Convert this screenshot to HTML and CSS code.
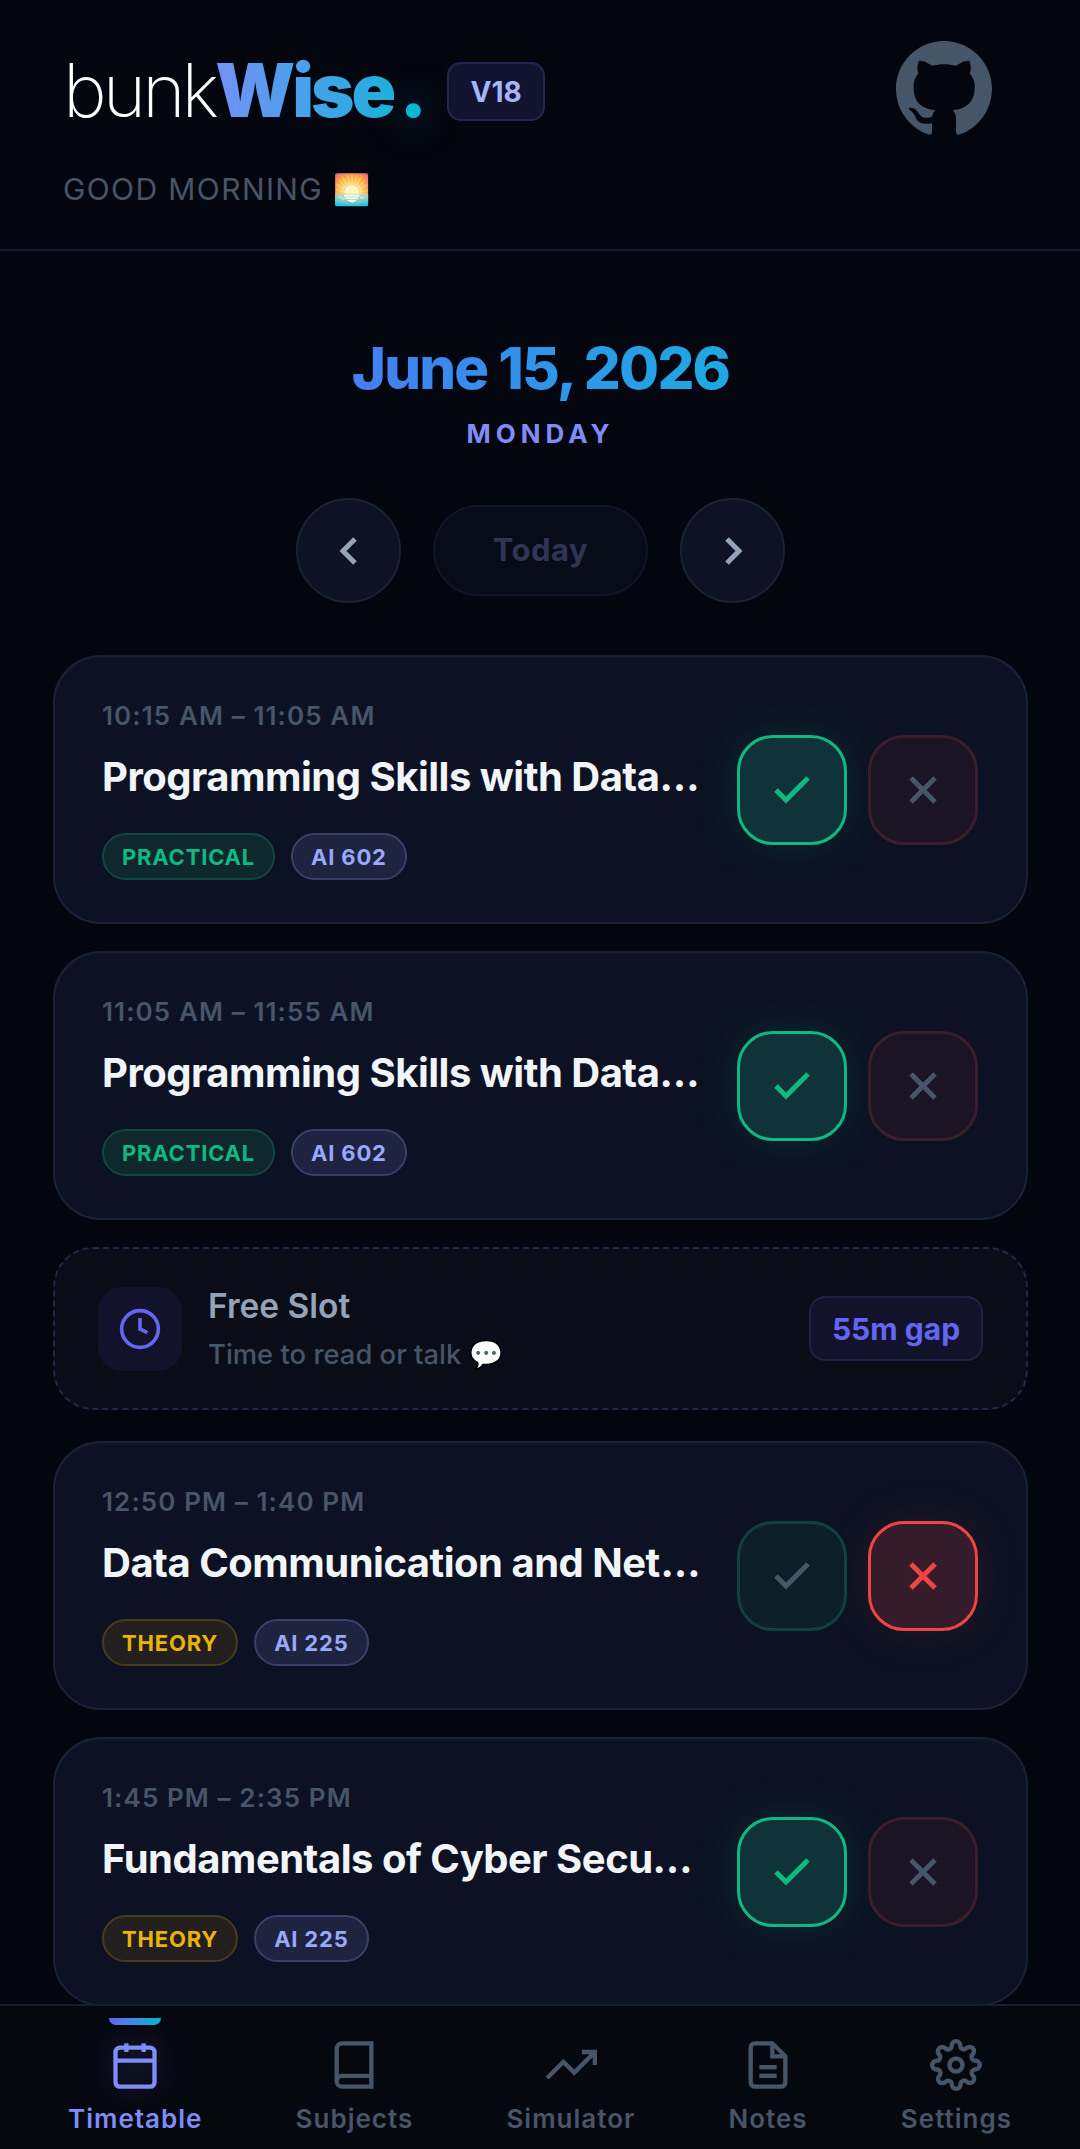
FILE: index.html
```html
<!DOCTYPE html>
<html lang="en">
<head>
  <meta charset="UTF-8" />
  <title>bunkWise</title>
  <link rel="stylesheet" href="styles.css">
</head>
<body>
  <header class="top-bar">
    <div class="top-left">
      <div class="brand-row">
        <div class="logo">bunk<span class="logo-wise">Wise</span><span class="logo-dot">.</span></div>
        <span class="version">V18</span>
      </div>
      <div class="greeting">GOOD MORNING 🌅</div>
    </div>
    <svg class="github" viewBox="0 0 16 16" fill="currentColor"><path d="M8 0C3.58 0 0 3.58 0 8c0 3.54 2.29 6.53 5.47 7.59.4.07.55-.17.55-.38 0-.19-.01-.82-.01-1.49-2.01.37-2.53-.49-2.69-.94-.09-.23-.48-.94-.82-1.13-.28-.15-.68-.52-.01-.53.63-.01 1.08.58 1.23.82.72 1.21 1.87.87 2.33.66.07-.52.28-.87.51-1.07-1.78-.2-3.64-.89-3.64-3.95 0-.87.31-1.59.82-2.15-.08-.2-.36-1.02.08-2.12 0 0 .67-.21 2.2.82.64-.18 1.32-.27 2-.27.68 0 1.36.09 2 .27 1.53-1.04 2.2-.82 2.2-.82.44 1.1.16 1.92.08 2.12.51.56.82 1.27.82 2.15 0 3.07-1.87 3.75-3.65 3.95.29.25.54.73.54 1.48 0 1.07-.01 1.93-.01 2.2 0 .21.15.46.55.38A8.013 8.013 0 0016 8c0-4.42-3.58-8-8-8z"/></svg>
  </header>

  <main class="content">
    <h1 class="date">June 15, 2026</h1>
    <div class="weekday">MONDAY</div>

    <div class="date-nav">
      <button class="circle-btn"><svg viewBox="0 0 24 24" class="chev"><polyline points="15 18 9 12 15 6"/></svg></button>
      <button class="today-btn">Today</button>
      <button class="circle-btn"><svg viewBox="0 0 24 24" class="chev"><polyline points="9 18 15 12 9 6"/></svg></button>
    </div>

    <div class="slots">
      <div class="card">
        <div class="card-info">
          <div class="time">10:15 AM – 11:05 AM</div>
          <div class="title">Programming Skills with Data Science Lab</div>
          <div class="tags"><span class="tag practical">PRACTICAL</span><span class="tag room">AI 602</span></div>
        </div>
        <div class="actions">
          <button class="act yes on"><svg viewBox="0 0 24 24"><polyline points="20 6 9 17 4 12"/></svg></button>
          <button class="act no"><svg viewBox="0 0 24 24"><line x1="18" y1="6" x2="6" y2="18"/><line x1="6" y1="6" x2="18" y2="18"/></svg></button>
        </div>
      </div>

      <div class="card">
        <div class="card-info">
          <div class="time">11:05 AM – 11:55 AM</div>
          <div class="title">Programming Skills with Data Science Lab</div>
          <div class="tags"><span class="tag practical">PRACTICAL</span><span class="tag room">AI 602</span></div>
        </div>
        <div class="actions">
          <button class="act yes on"><svg viewBox="0 0 24 24"><polyline points="20 6 9 17 4 12"/></svg></button>
          <button class="act no"><svg viewBox="0 0 24 24"><line x1="18" y1="6" x2="6" y2="18"/><line x1="6" y1="6" x2="18" y2="18"/></svg></button>
        </div>
      </div>

      <div class="free-slot">
        <div class="free-icon"><svg viewBox="0 0 24 24"><circle cx="12" cy="12" r="10"/><polyline points="12 6 12 12 16 14"/></svg></div>
        <div class="free-text">
          <div class="free-title">Free Slot</div>
          <div class="free-sub">Time to read or talk 💬</div>
        </div>
        <div class="gap-pill">55m gap</div>
      </div>

      <div class="card">
        <div class="card-info">
          <div class="time">12:50 PM – 1:40 PM</div>
          <div class="title">Data Communication and Networking</div>
          <div class="tags"><span class="tag theory">THEORY</span><span class="tag room">AI 225</span></div>
        </div>
        <div class="actions">
          <button class="act yes"><svg viewBox="0 0 24 24"><polyline points="20 6 9 17 4 12"/></svg></button>
          <button class="act no on"><svg viewBox="0 0 24 24"><line x1="18" y1="6" x2="6" y2="18"/><line x1="6" y1="6" x2="18" y2="18"/></svg></button>
        </div>
      </div>

      <div class="card">
        <div class="card-info">
          <div class="time">1:45 PM – 2:35 PM</div>
          <div class="title">Fundamentals of Cyber Security</div>
          <div class="tags"><span class="tag theory">THEORY</span><span class="tag room">AI 225</span></div>
        </div>
        <div class="actions">
          <button class="act yes on"><svg viewBox="0 0 24 24"><polyline points="20 6 9 17 4 12"/></svg></button>
          <button class="act no"><svg viewBox="0 0 24 24"><line x1="18" y1="6" x2="6" y2="18"/><line x1="6" y1="6" x2="18" y2="18"/></svg></button>
        </div>
      </div>
    </div>
  </main>

  <nav class="bottom-nav">
    <div class="nav-item active">
      <svg viewBox="0 0 24 24"><rect x="3" y="4" width="18" height="18" rx="2" ry="2"/><line x1="16" y1="2" x2="16" y2="6"/><line x1="8" y1="2" x2="8" y2="6"/><line x1="3" y1="10" x2="21" y2="10"/></svg>
      <span>Timetable</span>
    </div>
    <div class="nav-item">
      <svg viewBox="0 0 24 24"><path d="M4 19.5A2.5 2.5 0 0 1 6.5 17H20"/><path d="M6.5 2H20v20H6.5A2.5 2.5 0 0 1 4 19.5v-15A2.5 2.5 0 0 1 6.5 2z"/></svg>
      <span>Subjects</span>
    </div>
    <div class="nav-item">
      <svg viewBox="0 0 24 24"><polyline points="23 6 13.5 15.5 8.5 10.5 1 18"/><polyline points="17 6 23 6 23 12"/></svg>
      <span>Simulator</span>
    </div>
    <div class="nav-item">
      <svg viewBox="0 0 24 24"><path d="M14 2H6a2 2 0 0 0-2 2v16a2 2 0 0 0 2 2h12a2 2 0 0 0 2-2V8z"/><polyline points="14 2 14 8 20 8"/><line x1="16" y1="13" x2="8" y2="13"/><line x1="16" y1="17" x2="8" y2="17"/></svg>
      <span>Notes</span>
    </div>
    <div class="nav-item">
      <svg viewBox="0 0 24 24"><circle cx="12" cy="12" r="3"/><path d="M19.4 15a1.65 1.65 0 0 0 .33 1.82l.06.06a2 2 0 0 1 0 2.83 2 2 0 0 1-2.83 0l-.06-.06a1.65 1.65 0 0 0-1.82-.33 1.65 1.65 0 0 0-1 1.51V21a2 2 0 0 1-2 2 2 2 0 0 1-2-2v-.09A1.65 1.65 0 0 0 9 19.4a1.65 1.65 0 0 0-1.82.33l-.06.06a2 2 0 0 1-2.83 0 2 2 0 0 1 0-2.83l.06-.06a1.65 1.65 0 0 0 .33-1.82 1.65 1.65 0 0 0-1.51-1H3a2 2 0 0 1-2-2 2 2 0 0 1 2-2h.09A1.65 1.65 0 0 0 4.6 9a1.65 1.65 0 0 0-.33-1.82l-.06-.06a2 2 0 0 1 0-2.83 2 2 0 0 1 2.83 0l.06.06a1.65 1.65 0 0 0 1.82.33H9a1.65 1.65 0 0 0 1-1.51V3a2 2 0 0 1 2-2 2 2 0 0 1 2 2v.09a1.65 1.65 0 0 0 1 1.51 1.65 1.65 0 0 0 1.82-.33l.06-.06a2 2 0 0 1 2.83 0 2 2 0 0 1 0 2.83l-.06.06a1.65 1.65 0 0 0-.33 1.82V9a1.65 1.65 0 0 0 1.51 1H21a2 2 0 0 1 2 2 2 2 0 0 1-2 2h-.09a1.65 1.65 0 0 0-1.51 1z"/></svg>
      <span>Settings</span>
    </div>
  </nav>
</body>
</html>
```

FILE: styles.css
```css
* {
  box-sizing: border-box;
}

body {
  margin: 0;
  height: 100vh;
  overflow: hidden;
  display: flex;
  flex-direction: column;
  background-color: #04060f;
  font-family: 'Inter', sans-serif;
}

button {
  font-family: inherit;
  padding: 0;
  cursor: pointer;
}

svg {
  fill: none;
  stroke: currentColor;
  stroke-width: 2;
  display: block;
}

/* header */
.top-bar {
  flex: none;
  height: 251px;
  padding: 41px 88px 0 63px;
  display: flex;
  justify-content: space-between;
  align-items: flex-start;
  border-bottom: 2px solid #161d31;
}

.brand-row {
  display: flex;
  align-items: center;
  gap: 20px;
  margin-top: 7px;
}

.logo {
  font-size: 74px;
  line-height: 84px;
  font-weight: 200;
  letter-spacing: -4px;
  color: #ffffff;
}

.logo-wise {
  font-weight: 900;
  letter-spacing: -3px;
  background: linear-gradient(90deg, #7391f6, #1eb0dc);
  -webkit-background-clip: text;
  background-clip: text;
  color: transparent;
}

.logo-dot {
  font-weight: 900;
  letter-spacing: 0;
  color: #06b6d4;
  margin-left: 6px;
  text-shadow: 0 0 36px rgba(6, 182, 212, 0.6);
}

.version {
  width: 98px;
  height: 59px;
  margin-top: 3px;
  display: flex;
  align-items: center;
  justify-content: center;
  border: 2px solid #23264f;
  border-radius: 14px;
  background-color: #12142f;
  color: #a5b4fc;
  font-size: 28px;
  font-weight: 700;
}

.greeting {
  margin-top: 38px;
  font-size: 30px;
  line-height: 38px;
  letter-spacing: 1.4px;
  color: #475569;
}

.github {
  width: 96px;
  height: 96px;
  color: #475569;
  stroke: none;
  fill: currentColor;
}

/* date block */
.content {
  flex: 1;
  min-height: 0;
  overflow: hidden;
  padding: 83px 52px 0 53px;
}

.date {
  margin: 0;
  text-align: center;
  font-size: 58px;
  line-height: 68px;
  font-weight: 800;
  letter-spacing: -1.8px;
  background: linear-gradient(90deg, #4281f0 33%, #1ea7e3 67%);
  -webkit-background-clip: text;
  background-clip: text;
  color: transparent;
}

.weekday {
  margin-top: 16px;
  text-align: center;
  font-size: 26px;
  line-height: 32px;
  font-weight: 700;
  letter-spacing: 5px;
  color: #818cf8;
}

.date-nav {
  margin-top: 48px;
  display: flex;
  justify-content: center;
  align-items: center;
  gap: 32px;
}

.circle-btn {
  width: 105px;
  height: 105px;
  border-radius: 50%;
  border: 2px solid #1a2236;
  background-color: #0d1224;
  color: #94a3b8;
  display: flex;
  align-items: center;
  justify-content: center;
}

.chev {
  width: 48px;
  height: 48px;
  stroke-width: 2.5;
}

.today-btn {
  width: 215px;
  height: 91px;
  border-radius: 46px;
  border: 2px solid #10142a;
  background-color: #080b18;
  color: #2f3654;
  font-size: 31px;
  font-weight: 700;
  letter-spacing: 0.5px;
  line-height: 36px;
  padding-bottom: 2px;
}

/* slots */
.slots {
  margin-top: 52px;
  display: flex;
  flex-direction: column;
  gap: 27px;
}

.card {
  flex: none;
  height: 269px;
  display: flex;
  align-items: center;
  gap: 32px;
  padding: 0 48px 0 47px;
  background-color: #0c1223;
  border: 2px solid #1a2238;
  border-radius: 48px;
  box-shadow: inset 0 2px 0 rgba(255, 255, 255, 0.02);
}

.card-info {
  flex: 1;
  min-width: 0;
  padding-top: 1px;
}

.time {
  font-size: 26px;
  line-height: 32px;
  font-weight: 600;
  letter-spacing: 1.1px;
  color: #475569;
}

.title {
  margin-top: 21px;
  font-size: 40px;
  line-height: 48px;
  font-weight: 700;
  letter-spacing: -0.5px;
  color: #f1f5f9;
  white-space: nowrap;
  overflow: hidden;
  text-overflow: ellipsis;
}

.tags {
  margin-top: 32px;
  display: flex;
  gap: 16px;
}

.tag {
  height: 47px;
  padding: 0 18px;
  display: flex;
  align-items: center;
  border: 2px solid;
  border-radius: 24px;
  font-size: 22px;
  font-weight: 700;
  letter-spacing: 0.8px;
}

.practical {
  color: #10b981;
  background-color: #0f282e;
  border-color: #10483f;
}

.theory {
  color: #eab308;
  background-color: #231f1f;
  border-color: #4a3c16;
}

.room {
  color: #9aa8fb;
  background-color: #1e2340;
  border-color: #3a4068;
}

.actions {
  flex: none;
  display: flex;
  gap: 21px;
}

.act {
  width: 110px;
  height: 110px;
  border-radius: 36px;
  border-width: 3px;
  border-style: solid;
  display: flex;
  align-items: center;
  justify-content: center;
  color: #475569;
}

.act svg {
  width: 48px;
  height: 48px;
  stroke-width: 2.5;
}

.act.yes {
  background-color: #0c1f28;
  border-color: #0f423f;
}

.act.no {
  background-color: #1a1424;
  border-color: #3b1e2c;
}

.act.yes.on {
  color: #10b981;
  background-color: #0f3338;
  border-color: #10b981;
  box-shadow: 0 0 48px rgba(16, 185, 129, 0.14);
}

.act.no.on {
  color: #ef4444;
  background-color: #361b2a;
  border-color: #ef4444;
  box-shadow: 0 0 48px rgba(239, 68, 68, 0.12);
}

/* free slot */
.free-slot {
  flex: none;
  height: 163px;
  margin-bottom: 4px;
  display: flex;
  align-items: center;
  padding: 0 43px;
  background-color: #0a0d17;
  border: 2px dashed #23264a;
  border-radius: 40px;
}

.free-icon {
  flex: none;
  width: 84px;
  height: 84px;
  border-radius: 24px;
  background-color: #12132a;
  color: #6366f1;
  display: flex;
  align-items: center;
  justify-content: center;
}

.free-icon svg {
  width: 44px;
  height: 44px;
}

.free-text {
  flex: 1;
  margin-left: 26px;
}

.free-title {
  font-size: 33.5px;
  line-height: 40px;
  font-weight: 600;
  color: #94a3b8;
}

.free-sub {
  margin-top: 10px;
  font-size: 27.4px;
  line-height: 36px;
  font-weight: 500;
  color: #475569;
}

.gap-pill {
  flex: none;
  width: 174px;
  height: 65px;
  display: flex;
  align-items: center;
  justify-content: center;
  border: 2px solid #1f2045;
  border-radius: 16px;
  background-color: #12132a;
  color: #6366f1;
  font-size: 30px;
  font-weight: 700;
}

/* bottom nav */
.bottom-nav {
  flex: none;
  height: 145px;
  padding: 33px 68px 0;
  display: flex;
  justify-content: space-between;
  background-color: #05080f;
  border-top: 2px solid #161d31;
}

.nav-item {
  position: relative;
  display: flex;
  flex-direction: column;
  align-items: center;
  gap: 12px;
  color: #475569;
  font-size: 26px;
  line-height: 32px;
  font-weight: 600;
  letter-spacing: 1px;
}

.nav-item svg {
  width: 52px;
  height: 52px;
}

.nav-item.active {
  color: #818cf8;
}

.nav-item.active svg {
  filter: drop-shadow(0 0 14px rgba(129, 140, 248, 0.3));
}

.nav-item.active::before {
  content: "";
  position: absolute;
  top: -21px;
  left: 50%;
  margin-left: -26px;
  width: 52px;
  height: 7px;
  border-radius: 0 0 8px 8px;
  background: linear-gradient(90deg, #6366f1, #06b6d4);
}
```
